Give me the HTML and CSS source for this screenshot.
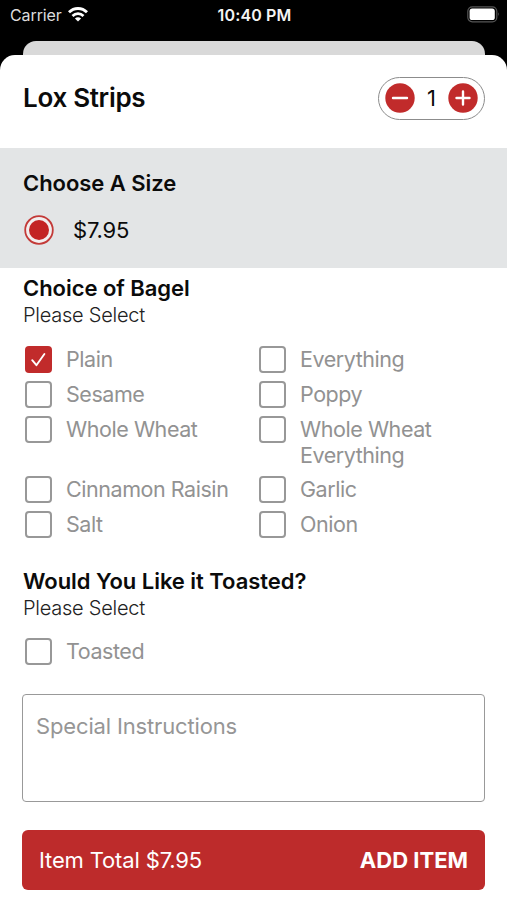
FILE: index.html
```html
<!DOCTYPE html>
<html lang="en">
<head>
<meta charset="utf-8">
<title>Lox Strips</title>
<link rel="stylesheet" href="styles.css">
</head>
<body>
<div class="phone">
  <header class="status">
    <div class="carrier"><span class="carrier-name">Carrier</span>
      <svg class="wifi" width="20" height="15" viewBox="0 0 20 15" fill="none" stroke="#fff" stroke-width="2.8"><path d="M1 5.3C6 .2 14 .2 19 5.3"/><path d="M4.5 8.9C7.7 5.8 12.3 5.8 15.5 8.9"/><path d="M10 14.6L6.9 11.5C8.6 9.9 11.4 9.9 13.1 11.5Z" fill="#fff" stroke="none"/></svg>
    </div>
    <div class="clock">10:40 PM</div>
    <svg class="battery" width="33" height="17" viewBox="0 0 33 17"><rect x=".8" y=".8" width="29" height="15" rx="4.5" fill="none" stroke="#555" stroke-width="1.2"/><rect x="2.6" y="2.6" width="25.2" height="11.4" rx="2.6" fill="#fff"/><path d="M31.3 6.3q1.6 2 0 4z" fill="#666"/></svg>
  </header>
  <div class="back-card"></div>
  <main class="sheet">
    <div class="title-row">
      <h1 class="title">Lox Strips</h1>
      <div class="stepper">
        <svg class="step" viewBox="0 0 30 30"><circle cx="15" cy="15" r="14.7"/><path d="M8 15H22"/></svg>
        <span class="qty">1</span>
        <svg class="step" viewBox="0 0 30 30"><circle cx="15" cy="15" r="14.7"/><path d="M8.5 15H21.5M15 8.5V21.5"/></svg>
      </div>
    </div>
    <section class="size">
      <h2 class="heading size-heading">Choose A Size</h2>
      <div class="size-option">
        <svg class="radio" width="30" height="30" viewBox="0 0 30 30"><circle cx="15" cy="15" r="13.8" fill="#f2eeee" stroke="#c33a38" stroke-width="1.8"/><circle cx="15" cy="15" r="10" fill="#c32424"/></svg>
        <span class="price">$7.95</span>
      </div>
    </section>
    <section class="group">
      <h2 class="heading bagel-heading">Choice of Bagel</h2>
      <p class="hint">Please Select</p>
      <div class="options">
        <div class="option"><span class="box checked"><svg width="27" height="27" viewBox="0 0 27 27" fill="none" stroke="#fff" stroke-width="1.9" stroke-linecap="round" stroke-linejoin="round"><path d="M7.2 14.2L11.4 19.2L19.4 8"/></svg></span><span class="label">Plain</span></div>
        <div class="option"><span class="box"></span><span class="label">Everything</span></div>
        <div class="option"><span class="box"></span><span class="label">Sesame</span></div>
        <div class="option"><span class="box"></span><span class="label">Poppy</span></div>
        <div class="option"><span class="box"></span><span class="label">Whole Wheat</span></div>
        <div class="option two-line"><span class="box"></span><span class="label">Whole Wheat<br>Everything</span></div>
        <div class="option"><span class="box"></span><span class="label">Cinnamon Raisin</span></div>
        <div class="option"><span class="box"></span><span class="label">Garlic</span></div>
        <div class="option"><span class="box"></span><span class="label">Salt</span></div>
        <div class="option"><span class="box"></span><span class="label">Onion</span></div>
      </div>
    </section>
    <section class="group toasted">
      <h2 class="heading toast-heading">Would You Like it Toasted?</h2>
      <p class="hint">Please Select</p>
      <div class="options">
        <div class="option"><span class="box"></span><span class="label">Toasted</span></div>
      </div>
    </section>
    <div class="notes"><span class="notes-text">Special Instructions</span></div>
    <div class="add"><span class="total">Item Total $7.95</span><span class="cta">ADD ITEM</span></div>
  </main>
</div>
</body>
</html>
```

FILE: styles.css
```css
* { box-sizing: border-box; }
body { margin: 0; font-family: Inter, "Liberation Sans", sans-serif; color: #0b0b0b; background: #000; }
h1, h2, p { margin: 0; }
svg { display: block; flex: none; }
span, h1, h2, p { white-space: nowrap; }
.phone { width: 507px; height: 900px; overflow: hidden; display: flex; flex-direction: column; background: #000; }
.status { height: 41px; flex: none; display: grid; grid-template-columns: 1fr auto 1fr; padding: 6px 8px 0 10px; align-items: start; color: #f4f4f4; }
.carrier { display: flex; gap: 6px; line-height: 18px; font-size: 16px; color: #ddd; }
.carrier-name { letter-spacing: -.1px; }
.wifi { margin-top: 1px; }
.clock { font-size: 16px; line-height: 18px; font-weight: 600; letter-spacing: .15px; }
.battery { justify-self: end; margin-right: -1px; }
.back-card { height: 14px; flex: none; margin: 0 22px 0 23px; background: #d9d9d9; border-radius: 13px 13px 0 0; }
.sheet { flex: 1; background: #fff; border-radius: 15px 15px 0 0; }
.title-row { height: 93px; display: flex; justify-content: space-between; align-items: flex-start; padding: 21px 22px 0 23px; }
.title { font-size: 26px; line-height: 44px; font-weight: 600; letter-spacing: -.3px; }
.stepper { width: 107px; height: 43px; margin-top: .5px; border: 1.5px solid #8c8c8c; border-radius: 22px; display: flex; align-items: center; justify-content: space-between; padding: 0 6px; }
.step { width: 30px; height: 30px; fill: #c12b2b; stroke: #fff; stroke-width: 2.4; stroke-linecap: round; }
.step circle { stroke: none; }
.qty { font-size: 22px; line-height: 28px; }
.size { height: 120px; background: #e3e5e6; padding: 21px 23px 0; }
.heading { font-size: 22px; line-height: 28px; font-weight: 600; letter-spacing: -.04px; }
.size-option { display: flex; align-items: center; gap: 19px; margin: 18px 0 0 1px; }
.price { font-size: 22px; line-height: 30px; letter-spacing: -.15px; }
.group { padding: 6px 23px 0; }
.hint { font-size: 20px; line-height: 26px; color: #222; font-weight: 300; letter-spacing: -.25px; }
.options { display: grid; grid-template-columns: 234px 1fr; row-gap: 9px; margin: 18px 0 0 2px; }
.option { display: flex; align-items: flex-start; gap: 14px; line-height: 26px; font-size: 21.5px; letter-spacing: -.45px; color: #929292; }
.two-line { margin-bottom: -1px; }
.box { width: 27px; height: 27px; margin-bottom: -1px; flex: none; border: 2px solid #989898; border-radius: 4px; }
.checked { background: #c12b2b; border: 0; }
.toasted { padding-top: 30px; }
.toasted .options { margin-top: 17px; }
.notes { height: 108px; margin: 30px 22px 0 22px; border: 1.5px solid #999; border-radius: 4px; padding: 16px 13px; font-size: 22px; line-height: 30px; letter-spacing: -.15px; color: #969696; }
.add { height: 60px; margin: 28px 22px 0; padding: 0 17px; border-radius: 6px; background: #bd2b2b; color: #fff; display: flex; align-items: center; justify-content: space-between; font-size: 22px; }
.total { letter-spacing: -.15px; }
.cta { font-weight: 700; }
```
